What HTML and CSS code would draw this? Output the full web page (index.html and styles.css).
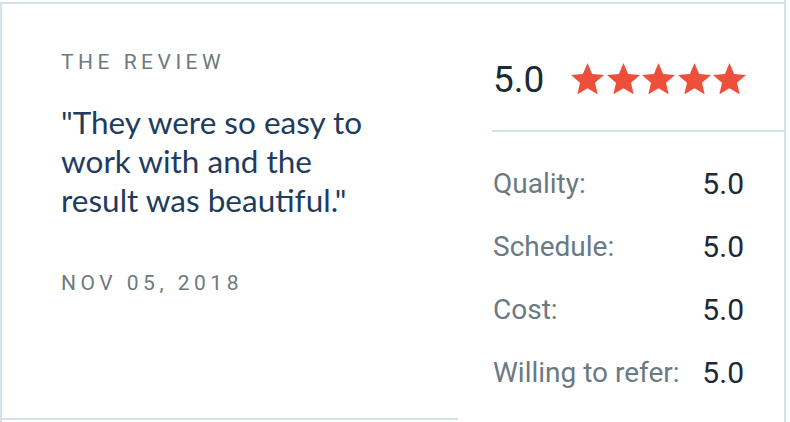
FILE: index.html
```html
<!DOCTYPE html>
<html lang="en">
<head>
<meta charset="utf-8">
<title>Review</title>
<link rel="stylesheet" href="styles.css">
</head>
<body>
<div class="page">
  <div class="card">
    <section class="review">
      <h3 class="eyebrow">The Review</h3>
      <p class="quote">"They were so easy to work with and the result was beautiful."</p>
      <p class="date">Nov 05, 2018</p>
    </section>
    <section class="scores">
      <div class="overall">
        <span class="overall-num">5.0</span>
        <div class="stars">
          <svg class="star" viewBox="2 2 20 19.27"><path d="M12 17.27L18.18 21l-1.64-7.03L22 9.24l-7.19-.61L12 2 9.19 8.63 2 9.24l5.46 4.73L5.82 21z"/></svg>
          <svg class="star" viewBox="2 2 20 19.27"><path d="M12 17.27L18.18 21l-1.64-7.03L22 9.24l-7.19-.61L12 2 9.19 8.63 2 9.24l5.46 4.73L5.82 21z"/></svg>
          <svg class="star" viewBox="2 2 20 19.27"><path d="M12 17.27L18.18 21l-1.64-7.03L22 9.24l-7.19-.61L12 2 9.19 8.63 2 9.24l5.46 4.73L5.82 21z"/></svg>
          <svg class="star" viewBox="2 2 20 19.27"><path d="M12 17.27L18.18 21l-1.64-7.03L22 9.24l-7.19-.61L12 2 9.19 8.63 2 9.24l5.46 4.73L5.82 21z"/></svg>
          <svg class="star" viewBox="2 2 20 19.27"><path d="M12 17.27L18.18 21l-1.64-7.03L22 9.24l-7.19-.61L12 2 9.19 8.63 2 9.24l5.46 4.73L5.82 21z"/></svg>
        </div>
      </div>
      <dl class="rows">
        <div class="row"><dt>Quality:</dt><dd>5.0</dd></div>
        <div class="row"><dt>Schedule:</dt><dd>5.0</dd></div>
        <div class="row"><dt>Cost:</dt><dd>5.0</dd></div>
        <div class="row"><dt>Willing to refer:</dt><dd>5.0</dd></div>
      </dl>
    </section>
  </div>
</div>
</body>
</html>
```
FILE: styles.css
```css
* { box-sizing: border-box; }

html, body {
  margin: 0;
  padding: 0;
  background: #ffffff;
}

body {
  font-family: Roboto, "Liberation Sans", sans-serif;
  overflow: hidden;
}

.page {
  width: 786px;
  height: 422px;
  padding-top: 2px;
  border-right: 2px solid #d4e1e8;
}

.card {
  display: flex;
  height: 420px;
  border-top: 2px solid #d4e1e8;
  border-left: 2px solid #d4e1e8;
}

.review {
  width: 456px;
  height: 416px;
  border-bottom: 2px solid #d4e1e8;
  padding: 46px 20px 0 59px;
}

.eyebrow {
  margin: 0;
  font-family: Roboto, "Liberation Sans", sans-serif;
  font-weight: 400;
  font-size: 21px;
  line-height: 24px;
  letter-spacing: 4.5px;
  text-transform: uppercase;
  color: #6e7a80;
}

.quote {
  margin: 29px 0 0;
  font-family: Lato, "Liberation Sans", sans-serif;
  font-size: 31.5px;
  line-height: 39px;
  color: #1f3c5e;
  max-width: 330px;
}

.date {
  margin: 51px 0 0;
  font-size: 21px;
  line-height: 24px;
  letter-spacing: 4.5px;
  text-transform: uppercase;
  color: #6e7a80;
}

.scores {
  flex: 1;
  padding: 56px 0 0 34px;
}

.overall {
  display: flex;
  align-items: center;
  height: 40px;
  gap: 27px;
  padding-left: 1px;
}

.overall-num {
  font-size: 37px;
  line-height: 36px;
  color: #1b2a36;
}

.stars {
  display: flex;
  gap: 2.5px;
  margin-top: -3px;
}

.star {
  width: 33px;
  height: 31.8px;
  fill: #ee4f3a;
}

.rows {
  margin: 30px 0 0;
  padding: 20px 40px 0 1px;
  border-top: 2px solid #d4e1e8;
}

.row {
  display: flex;
  justify-content: space-between;
  align-items: center;
  height: 63px;
}

.row dt {
  font-size: 28px;
  color: #6b7a82;
}

.row dd {
  margin: 0;
  font-size: 30px;
  color: #1b2a36;
}
```
